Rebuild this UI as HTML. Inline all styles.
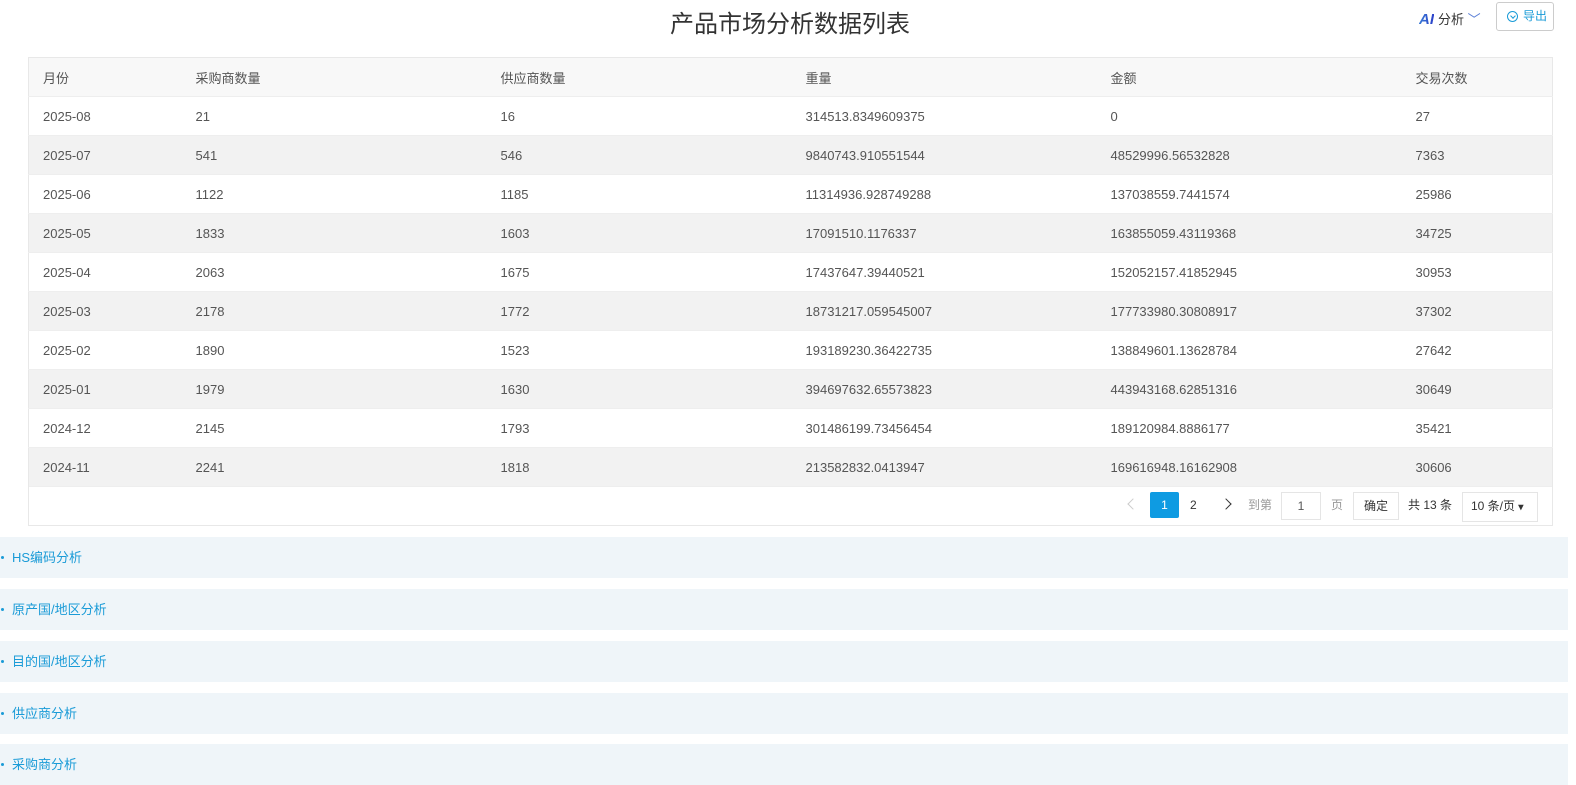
<!DOCTYPE html><html><head><meta charset="utf-8"><style>
*{margin:0;padding:0;box-sizing:border-box}
body{width:1576px;height:785px;background:#fff;font-family:"Liberation Sans","Noto Sans CJK SC",sans-serif;font-size:13px;color:#555;position:relative;overflow:hidden}
.title{position:absolute;left:0;width:1580px;top:4px;text-align:center;font-size:24px;color:#333}
.ai{position:absolute;left:1419px;top:9px;font-size:13px;color:#333}
.ai b{font-style:italic;font-size:15px;background:linear-gradient(90deg,#3a7bd5,#2a3fc9);-webkit-background-clip:text;color:transparent;margin-right:4px}
.exp{position:absolute;left:1496px;top:2px;width:58px;height:29px;border:1px solid #ccc;border-radius:3px;color:#1a9bd7;font-size:12px;line-height:27px;padding-left:26px}
.exp i{position:absolute;left:10px;top:8px;width:11px;height:11px;border:1px solid #1a9bd7;border-radius:50%}
.exp i:after{content:"";position:absolute;left:3px;top:2px;width:3px;height:3px;border-right:1px solid #1a9bd7;border-bottom:1px solid #1a9bd7;transform:rotate(45deg)}
table{position:absolute;left:28px;top:57px;width:1525px;border-collapse:collapse;border:1px solid #e8e8e8}
td{height:39px;padding-left:14px;border-bottom:1px solid #eee;font-size:13px;color:#555}
tr.h td{background:#f8f8f8;height:39px}
tr:nth-child(odd):not(.h) td{background:#f2f2f2}
.pgbox{position:absolute;left:28px;top:484px;width:1525px;height:42px;border:1px solid #e8e8e8;border-top:none}
.pg{position:absolute;top:492px;font-size:12px;line-height:26px;color:#333}
.arr{position:absolute;top:500px;width:8px;height:8px;border-left:1.5px solid #333;border-bottom:1.5px solid #333}
.sec{position:absolute;left:0;width:1568px;height:41px;background:#eff5f9;color:#1a9bd7;font-size:13px;line-height:41px;padding-left:12px}
.sec:before{content:"";position:absolute;left:1px;top:19px;width:3px;height:3px;background:#1a9bd7;border-radius:50%}
</style></head><body>
<div class="title">产品市场分析数据列表</div>
<div class="ai"><b>AI</b>分析 <span style="color:#5b7fd6">﹀</span></div>
<div class="exp"><i></i>导出</div>
<table>
<tr class="h"><td style="width:153px">月份</td><td style="width:305px">采购商数量</td><td style="width:305px">供应商数量</td><td style="width:305px">重量</td><td style="width:305px">金额</td><td>交易次数</td></tr>
<tr><td>2025-08</td><td>21</td><td>16</td><td>314513.8349609375</td><td>0</td><td>27</td></tr>
<tr><td>2025-07</td><td>541</td><td>546</td><td>9840743.910551544</td><td>48529996.56532828</td><td>7363</td></tr>
<tr><td>2025-06</td><td>1122</td><td>1185</td><td>11314936.928749288</td><td>137038559.7441574</td><td>25986</td></tr>
<tr><td>2025-05</td><td>1833</td><td>1603</td><td>17091510.1176337</td><td>163855059.43119368</td><td>34725</td></tr>
<tr><td>2025-04</td><td>2063</td><td>1675</td><td>17437647.39440521</td><td>152052157.41852945</td><td>30953</td></tr>
<tr><td>2025-03</td><td>2178</td><td>1772</td><td>18731217.059545007</td><td>177733980.30808917</td><td>37302</td></tr>
<tr><td>2025-02</td><td>1890</td><td>1523</td><td>193189230.36422735</td><td>138849601.13628784</td><td>27642</td></tr>
<tr><td>2025-01</td><td>1979</td><td>1630</td><td>394697632.65573823</td><td>443943168.62851316</td><td>30649</td></tr>
<tr><td>2024-12</td><td>2145</td><td>1793</td><td>301486199.73456454</td><td>189120984.8886177</td><td>35421</td></tr>
<tr><td>2024-11</td><td>2241</td><td>1818</td><td>213582832.0413947</td><td>169616948.16162908</td><td>30606</td></tr>
</table>
<div class="pgbox"></div>
<div class="arr" style="left:1129px;transform:rotate(45deg);border-color:#ccc"></div>
<div class="pg" style="left:1150px;width:29px;background:#0e9be2;color:#fff;text-align:center;border-radius:2px">1</div>
<div class="pg" style="left:1190px">2</div>
<div class="arr" style="left:1222px;transform:rotate(-135deg)"></div>
<div class="pg" style="left:1248px;color:#999">到第</div>
<div class="pg" style="left:1281px;width:40px;border:1px solid #e5e5e5;text-align:center;color:#555">1</div>
<div class="pg" style="left:1331px;color:#999">页</div>
<div class="pg" style="left:1353px;width:46px;border:1px solid #e5e5e5;text-align:center">确定</div>
<div class="pg" style="left:1408px">共 13 条</div>
<div class="pg" style="left:1462px;width:76px;border:1px solid #e5e5e5;padding-left:8px">10 条/页 <b style="font-size:10px">▾</b></div>
<div class="sec" style="top:537px">HS编码分析</div>
<div class="sec" style="top:589px">原产国/地区分析</div>
<div class="sec" style="top:641px">目的国/地区分析</div>
<div class="sec" style="top:693px">供应商分析</div>
<div class="sec" style="top:744px">采购商分析</div>
</body></html>
